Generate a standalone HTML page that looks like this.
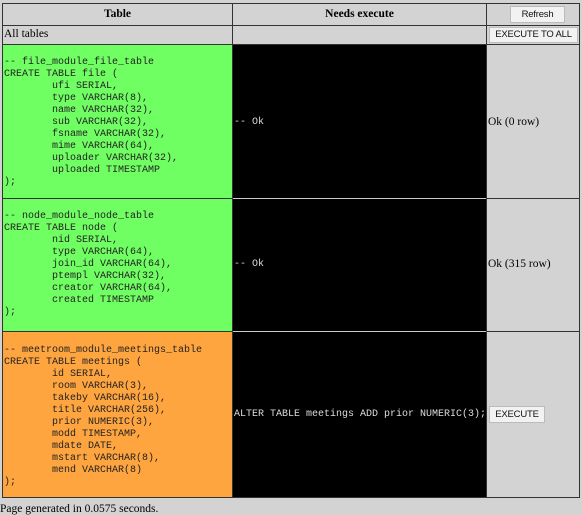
<!DOCTYPE html>
<html><head><style>
body{margin:0;width:582px;height:515px;background:#d3d3d3;position:relative;overflow:hidden;font-family:"Liberation Serif",serif;font-size:11.5px;color:#000}
.c{position:absolute;box-sizing:border-box}
.l{position:absolute;background:#333}
pre{margin:0;font-family:"Liberation Mono",monospace;font-size:10px;line-height:12px;position:absolute;left:4px;white-space:pre;tab-size:8}
.btn{position:absolute;box-sizing:border-box;background:#f2f2f2;border:1px solid #bbb;font-family:"Liberation Sans",sans-serif;font-size:9.5px;text-align:center;color:#111;letter-spacing:-0.2px}
.t{position:absolute;white-space:nowrap}
</style></head><body>
<div class="c" style="left:3px;top:45px;width:229px;height:153px;background:#70ff63"></div>
<div class="c" style="left:3px;top:199px;width:229px;height:132px;background:#70ff63"></div>
<div class="c" style="left:3px;top:332px;width:229px;height:165px;background:#ffa540"></div>
<div class="c" style="left:233px;top:45px;width:253px;height:452px;background:#000"></div>
<div class="l" style="left:233px;top:198px;width:253px;height:1px;background:#ccc"></div>
<div class="l" style="left:233px;top:331px;width:253px;height:1px;background:#ccc"></div>
<div class="l" style="left:2px;top:3px;width:578px;height:1px"></div>
<div class="l" style="left:2px;top:497px;width:578px;height:1px"></div>
<div class="l" style="left:2px;top:3px;width:1px;height:495px"></div>
<div class="l" style="left:579px;top:3px;width:1px;height:495px"></div>
<div class="l" style="left:232px;top:3px;width:1px;height:495px"></div>
<div class="l" style="left:486px;top:3px;width:1px;height:495px"></div>
<div class="l" style="left:2px;top:25px;width:578px;height:1px"></div>
<div class="l" style="left:2px;top:44px;width:578px;height:1px"></div>
<div class="l" style="left:2px;top:198px;width:231px;height:1px"></div>
<div class="l" style="left:486px;top:198px;width:94px;height:1px"></div>
<div class="l" style="left:2px;top:331px;width:231px;height:1px"></div>
<div class="l" style="left:486px;top:331px;width:94px;height:1px"></div>

<div class="t" style="left:3px;width:229px;top:8px;text-align:center;font-weight:bold">Table</div>
<div class="t" style="left:233px;width:253px;top:8px;text-align:center;font-weight:bold">Needs execute</div>
<div class="btn" style="left:510px;top:6px;width:55px;height:17px;line-height:15px">Refresh</div>
<div class="t" style="left:4px;top:28px">All tables</div>
<div class="btn" style="left:489px;top:27px;width:89px;height:16px;line-height:14px">EXECUTE TO ALL</div>

<pre style="top:57px;color:#222">-- file_module_file_table
CREATE TABLE file (
        ufi SERIAL,
        type VARCHAR(8),
        name VARCHAR(32),
        sub VARCHAR(32),
        fsname VARCHAR(32),
        mime VARCHAR(64),
        uploader VARCHAR(32),
        uploaded TIMESTAMP
);</pre>
<pre style="top:211px;color:#222">-- node_module_node_table
CREATE TABLE node (
        nid SERIAL,
        type VARCHAR(64),
        join_id VARCHAR(64),
        ptempl VARCHAR(32),
        creator VARCHAR(64),
        created TIMESTAMP
);</pre>
<pre style="top:345px;color:#222">-- meetroom_module_meetings_table
CREATE TABLE meetings (
        id SERIAL,
        room VARCHAR(3),
        takeby VARCHAR(16),
        title VARCHAR(256),
        prior NUMERIC(3),
        modd TIMESTAMP,
        mdate DATE,
        mstart VARCHAR(8),
        mend VARCHAR(8)
);</pre>
<pre style="left:234px;top:117px;color:#ddd">-- Ok</pre>
<pre style="left:234px;top:259px;color:#ddd">-- Ok</pre>
<pre style="left:234px;top:409px;color:#ddd">ALTER TABLE meetings ADD prior NUMERIC(3);</pre>
<div class="t" style="left:488px;top:116px">Ok (0 row)</div>
<div class="t" style="left:488px;top:258px">Ok (315 row)</div>
<div class="btn" style="left:489px;top:406px;width:56px;height:17px;line-height:15px">EXECUTE</div>
<div class="t" style="left:0px;top:503px">Page generated in 0.0575 seconds.</div>
</body></html>
